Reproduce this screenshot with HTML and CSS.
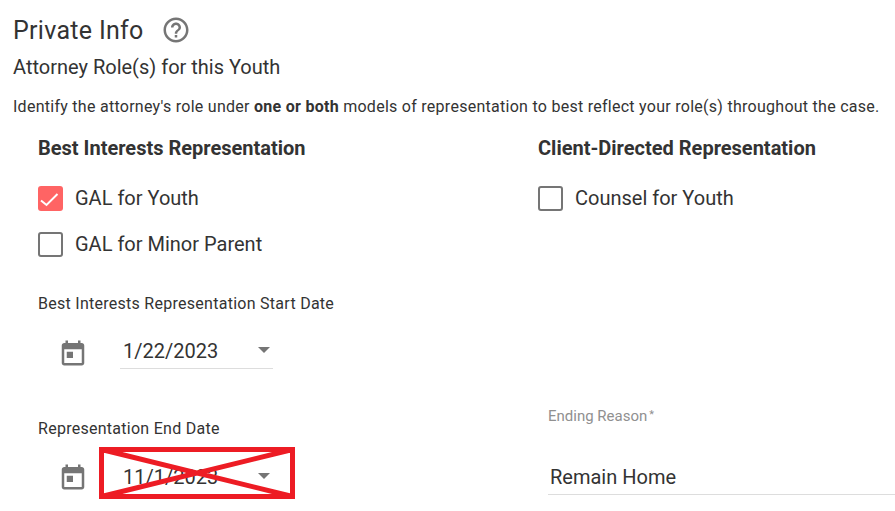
FILE: index.html
```html
<!DOCTYPE HTML><html>
<head>
  <title>Private Info</title>
  <meta name="viewport" content="width=device-width, initial-scale=1">
  <meta charset="UTF-8">
  <link rel="stylesheet" href="styles.css">
</head>
<body>
  <div class="heading">
    <h1>Private Info</h1>
    <svg class="help" viewBox="0 0 24 24" width="30" height="30"><path fill="#757575" d="M11 18h2v-2h-2v2zm1-16C6.48 2 2 6.48 2 12s4.48 10 10 10 10-4.48 10-10S17.52 2 12 2zm0 18c-4.41 0-8-3.59-8-8s3.59-8 8-8 8 3.59 8 8-3.59 8-8 8zm0-14c-2.21 0-4 1.79-4 4h2c0-1.1.9-2 2-2s2 .9 2 2c0 2-3 1.75-3 5h2c0-2.25 3-2.5 3-5 0-2.21-1.79-4-4-4z"/></svg>
  </div>
  <h2>Attorney Role(s) for this Youth</h2>
  <p class="intro">Identify the attorney's role under <b>one or both</b> models of representation to best reflect your role(s) throughout the case.</p>

  <div class="columns">
    <div class="col">
      <h3>Best Interests Representation</h3>
      <label class="check"><span class="box checked"><svg viewBox="0 0 25 25" width="25" height="25"><path fill="none" stroke="#fff" stroke-width="2" d="M3 14.500l5.500 4.500L19.500 8"/></svg></span>GAL for Youth</label>
      <label class="check"><span class="box"></span>GAL for Minor Parent</label>

      <p class="date-label start-label">Best Interests Representation Start Date</p>
      <div class="date-row">
        <svg class="cal" viewBox="0 0 24 24" width="30" height="30"><path fill="#757575" d="M19 4h-1V2h-2v2H8V2H6v2H5c-1.11 0-2 .9-2 2v14c0 1.1.89 2 2 2h14c1.1 0 2-.9 2-2V6c0-1.1-.9-2-2-2zm0 16H5V9h14v11zM7 11h5v5H7z"/></svg>
        <div class="date-field"><span>1/22/2023</span><i class="arrow"></i></div>
      </div>

      <p class="date-label end-label">Representation End Date</p>
      <div class="date-row end-row">
        <svg class="cal" viewBox="0 0 24 24" width="30" height="30"><path fill="#757575" d="M19 4h-1V2h-2v2H8V2H6v2H5c-1.11 0-2 .9-2 2v14c0 1.1.89 2 2 2h14c1.1 0 2-.9 2-2V6c0-1.1-.9-2-2-2zm0 16H5V9h14v11zM7 11h5v5H7z"/></svg>
        <div class="date-field struck">
          <span>11/1/2023</span><i class="arrow"></i>
          <svg class="cross" viewBox="0 0 196 52" width="196" height="52"><path fill="none" stroke="#ed1c24" stroke-width="5" d="M2.500 2.500h191v47H2.500zM2.500 2.500l191 47M193.500 2.500l-191 47"/></svg>
        </div>
      </div>
    </div>

    <div class="col">
      <h3>Client-Directed Representation</h3>
      <label class="check"><span class="box"></span>Counsel for Youth</label>
      <div class="reason">
        <p class="reason-label">Ending Reason<sup>*</sup></p>
        <div class="reason-value">Remain Home</div>
      </div>
    </div>
  </div>
</body>
</html>
```

FILE: styles.css
```css
html {
  font-family: Roboto, Arial, sans-serif;
  color: #333;
  background: #fff;
}
body {
  margin: 0;
  height: 511px;
  overflow: hidden;
}
.heading {
  display: flex;
  align-items: center;
  gap: 17px;
  padding: 15px 0 0 13px;
  height: 30px;
}
h1 {
  margin: 0;
  font-size: 25px;
  font-weight: 400;
  letter-spacing: 0.3px;
}
h2 {
  margin: 10px 0 0 13px;
  font-size: 20px;
  line-height: 24px;
  font-weight: 400;
}
.intro {
  margin: 18px 0 0 13px;
  font-size: 16px;
  line-height: 20px;
  letter-spacing: 0.27px;
  white-space: nowrap;
}
.intro b {
  font-weight: 700;
}
.columns {
  display: grid;
  grid-template-columns: 500px 357px;
  padding-left: 38px;
  margin-top: 20px;
}
h3 {
  margin: 0;
  font-size: 20px;
  line-height: 22px;
  font-weight: 700;
}
.check {
  display: flex;
  align-items: center;
  gap: 12px;
  height: 26px;
  margin-top: 26px;
  font-size: 20px;
}
.check + .check {
  margin-top: 20px;
}
.box {
  box-sizing: border-box;
  width: 25px;
  height: 25px;
  border: 2px solid #757575;
  border-radius: 3px;
}
.box.checked {
  background: #ff6464;
  border: 0;
}
.box.checked svg {
  display: block;
}
.date-label {
  margin: 0;
  font-size: 16px;
  line-height: 20px;
  letter-spacing: 0.27px;
}
.start-label {
  margin-top: 37px;
}
.end-label {
  margin-top: 50px;
}
.date-row {
  display: flex;
  align-items: center;
  gap: 32px;
  margin: 20px 0 0 20px;
}
.cal {
  margin-top: 2px;
}
.end-row .cal {
  margin-top: 0;
}
.date-field {
  position: relative;
  display: flex;
  justify-content: space-between;
  align-items: center;
  box-sizing: border-box;
  width: 153px;
  height: 35px;
  padding: 0 3px;
  font-size: 20px;
  border-bottom: 1px solid #ddd;
}
.arrow {
  width: 0;
  height: 0;
  margin-top: -2px;
  border-left: 6px solid transparent;
  border-right: 6px solid transparent;
  border-top: 6px solid #757575;
}
.struck {
  border-bottom: 0;
}
.cross {
  position: absolute;
  left: -21px;
  top: -12px;
}
.reason {
  margin: 195px 0 0 10px;
  width: 347px;
}
.reason-label {
  margin: 0;
  font-size: 15px;
  line-height: 20px;
  color: #909090;
}
.reason-label sup {
  font-size: 11px;
  margin-left: 2px;
  line-height: 0;
  vertical-align: 3px;
}
.reason-value {
  margin-top: 36px;
  padding: 0 0 2px 2px;
  font-size: 20px;
  line-height: 30px;
  border-bottom: 1px solid #ddd;
}
```
